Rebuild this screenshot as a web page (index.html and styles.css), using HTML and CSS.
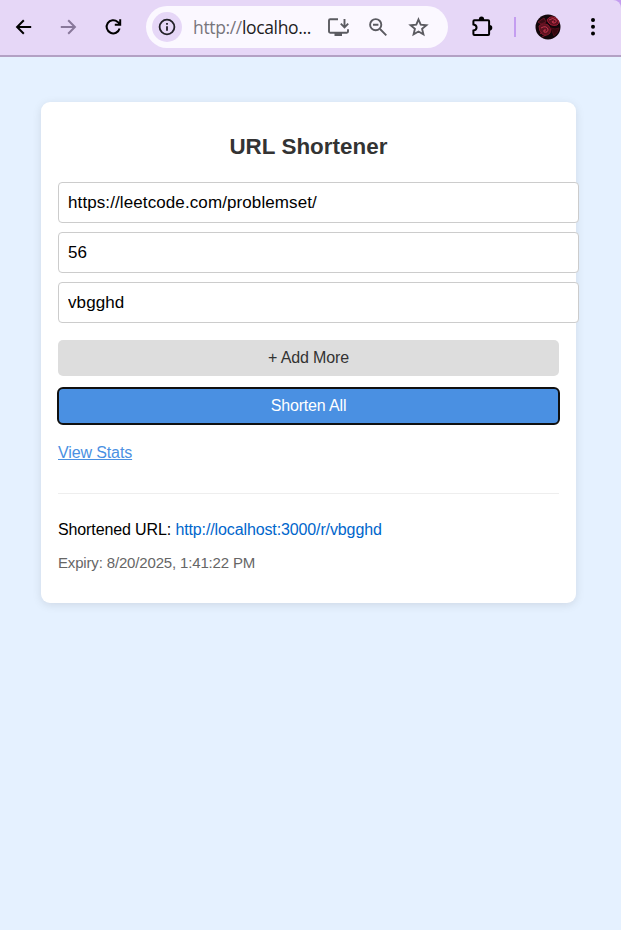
FILE: index.html
```html
<!DOCTYPE html>
<html lang="en">
<head>
<meta charset="utf-8">
<title>URL Shortener</title>
<link rel="stylesheet" href="styles.css">
</head>
<body>
<div class="frame">
<header class="toolbar">
  <svg class="nav back" viewBox="0 0 24 24"><path d="M19.200 12H5.500M11.800 5.300 5.100 12l6.700 6.700"/></svg>
  <svg class="nav forward" viewBox="0 0 24 24"><path d="M4.800 12h13.700M12.200 5.300l6.700 6.700-6.700 6.700"/></svg>
  <svg class="nav reload" viewBox="0 0 24 24"><path d="M18.600 13.500A6.600 6.600 0 1 1 16.700 6.900L18.800 9M19.200 4.300v5.400h-5.400"/></svg>
  <div class="address">
    <span class="info"><svg viewBox="0 0 18 18"><circle cx="9" cy="9" r="7.4"/><path d="M9 8.2v4.600M9 5v1.800"/></svg></span>
    <span class="url"><span class="scheme">http://</span>localho...</span>
    <svg class="tool install" viewBox="0 0 24 24"><path d="M12 4.300H4.200q-1.200 0-1.200 1.200v11q0 1.200 1.200 1.200h16.600q1.200 0 1.200-1.200v-2.300M18.500 4v8M14.800 8.700l3.700 3.700 3.700-3.700"/><path class="solid" d="M8.500 17h7.500v4H8.500z"/></svg>
    <svg class="tool magnify" viewBox="0 0 24 24"><circle cx="9.700" cy="9.700" r="5.600"/><path d="m14 14 6.300 6.300M7 9.700h5.400"/></svg>
    <svg class="tool star" viewBox="0 0 24 24"><path d="m12.500 4.500 2.200 5.200 5.700.5-4.300 3.700 1.300 5.500-4.900-2.900-4.900 2.900 1.300-5.500-4.300-3.700 5.700-.5z"/></svg>
  </div>
  <svg class="puzzle" viewBox="0 0 24 24"><path d="M4.400 5.300h13.700q1 0 1 1v12.700q0 1-1 1H4.400q-1 0-1-1v-3.400c4.200-.8 4.200-5.600 0-6.200V6.300q0-1 1-1z"/><path class="solid" d="M8.800 5a2.700 3.400 0 0 1 5.400 0zM19.500 9.900a2.800 2.800 0 0 1 0 5.600z"/></svg>
  <span class="divider"></span>
  <svg class="avatar" viewBox="0 0 26 26">
    <circle cx="13" cy="13" r="12.500" fill="#12060a"/>
    <g fill="#5c1220" stroke="#a31c35" stroke-width="1">
      <path d="M12 6q3-5 9-2 5 4 1 7-7 2-10-5z"/>
      <path d="M4 12q4-4 9-1 4 3 2 8-4 4-8 1-3-3-3-8z" stroke="#84182c"/>
      <path d="M16 14q4 2 8 0-1 5-5 8z" fill="#35080f" stroke="#4c0c17"/>
      <path d="M3 8l6-4 2 4-5 2z" fill="#390b14" stroke="#671322"/>
    </g>
    <g fill="none" stroke="#d13a52" stroke-width=".9">
      <path d="M14 6q4-3 7 0 1 3-3 3-2-2 1-2"/>
      <path d="M6 14q5-3 7 1 0 4-4 3-1-3 2-2"/>
      <path d="M5 20l2-2M7 23l4-2" stroke="#87192d"/>
    </g>
  </svg>
  <svg class="dots" viewBox="0 0 6 20"><circle cx="3" cy="3" r="2"/><circle cx="3" cy="9.700" r="2"/><circle cx="3" cy="16.500" r="2"/></svg>
</header>
</div>
<main class="page">
  <section class="card">
    <h1>URL Shortener</h1>
    <input class="field" type="text" value="https://leetcode.com/problemset/">
    <input class="field" type="text" value="56">
    <input class="field" type="text" value="vbgghd">
    <button class="button add" type="button">+ Add More</button>
    <button class="button submit" type="button">Shorten All</button>
    <a class="stats" href="#">View Stats</a>
    <div class="result">
      <p class="short">Shortened URL: <a href="#">http://localhost:3000/r/vbgghd</a></p>
      <p class="expiry">Expiry: 8/20/2025, 1:41:22 PM</p>
    </div>
  </section>
</main>
</body>
</html>
```
FILE: styles.css
```css
* { box-sizing: border-box; }
body {
  margin: 0;
  min-height: 930px;
  background: #e5f1ff;
  font-family: "Liberation Sans", Arial, sans-serif;
  font-size: 16px;
  color: #000;
}
.frame { background: #c49df0; }
.toolbar {
  display: flex;
  align-items: center;
  height: 57px;
  padding: 0 0 1px 12px;
  background: #e6d7f7;
  border-bottom: 2px solid #b3a1c4;
  border-top-right-radius: 8px;
}
svg { display: block; flex: none; fill: none; stroke: currentColor; }
.nav { width: 24px; height: 24px; stroke-width: 2; color: #000; }
.forward { margin-left: 20px; color: #88789a; }
.reload { margin-left: 21px; }
.address {
  display: flex;
  align-items: center;
  width: 302px;
  height: 42px;
  margin: 0 22px 0 21px;
  padding-left: 6px;
  border-radius: 21px;
  background: #fbf8ff;
}
.info {
  display: grid;
  place-items: center;
  width: 30px;
  height: 30px;
  border-radius: 50%;
  background: #e6d7f7;
}
.info svg { width: 18px; height: 18px; stroke-width: 1.8; color: #222028; }
.url {
  width: 132px;
  padding-left: 11px;
  font-family: "Open Sans", "Noto Sans", sans-serif;
  font-size: 17.5px;
  line-height: 24px;
  letter-spacing: -0.35px;
  white-space: nowrap;
  color: #1e1d22;
}
.scheme { color: #77757c; }
.tool { width: 24px; height: 24px; margin-right: 16px; stroke-width: 1.9; color: #5b5b61; }
.install { margin-left: 12px; }
.solid { fill: currentColor; stroke: none; }
.puzzle { width: 24px; height: 24px; stroke-width: 2; color: #000; }
.divider { width: 2px; height: 20px; margin: 0 20px; background: #c49df0; }
.avatar { width: 26px; height: 26px; margin-left: -1px; stroke: none; }
.dots { width: 6px; height: 20px; margin-left: 29px; fill: #000; stroke: none; }
.page { padding: 45px 45px 0 41px; }
.card {
  height: 501px;
  padding: 31px 17px 0;
  border-radius: 9px;
  background: #fff;
  box-shadow: 0 2px 10px rgba(0, 0, 0, 0.1);
}
h1 {
  margin: 0 0 21px;
  font-size: 22.4px;
  line-height: 28px;
  letter-spacing: 0.05px;
  text-align: center;
  color: #333;
}
.field {
  display: block;
  width: 521px;
  height: 41px;
  margin: 0 0 9px;
  padding: 0 9px;
  border: 1px solid #ccc;
  border-radius: 4px;
  background: #fff;
  font: 17px "Liberation Sans", Arial, sans-serif;
  letter-spacing: 0.1px;
  color: #000;
}
.button {
  display: block;
  width: 501px;
  height: 36px;
  padding: 0;
  border: 0;
  border-radius: 5px;
  font: 16px "Liberation Sans", Arial, sans-serif;
  letter-spacing: -0.15px;
}
.add { margin-top: 17px; background: #ddd; color: #333; }
.submit { margin-top: 12px; background: #4a90e2; color: #fff; outline: 2px solid #101010; outline-offset: -1px; }
.stats { display: block; width: max-content; margin-top: 19px; line-height: 20px; letter-spacing: -0.12px; color: #4a90e2; }
.result { margin-top: 30px; padding-top: 26px; border-top: 1px solid #eee; }
.result p { margin: 0; line-height: 20px; letter-spacing: -0.12px; }
.short a { color: #0066cc; text-decoration: none; }
.result .expiry { margin-top: 13px; font-size: 15px; letter-spacing: -0.16px; color: #666; }
```
